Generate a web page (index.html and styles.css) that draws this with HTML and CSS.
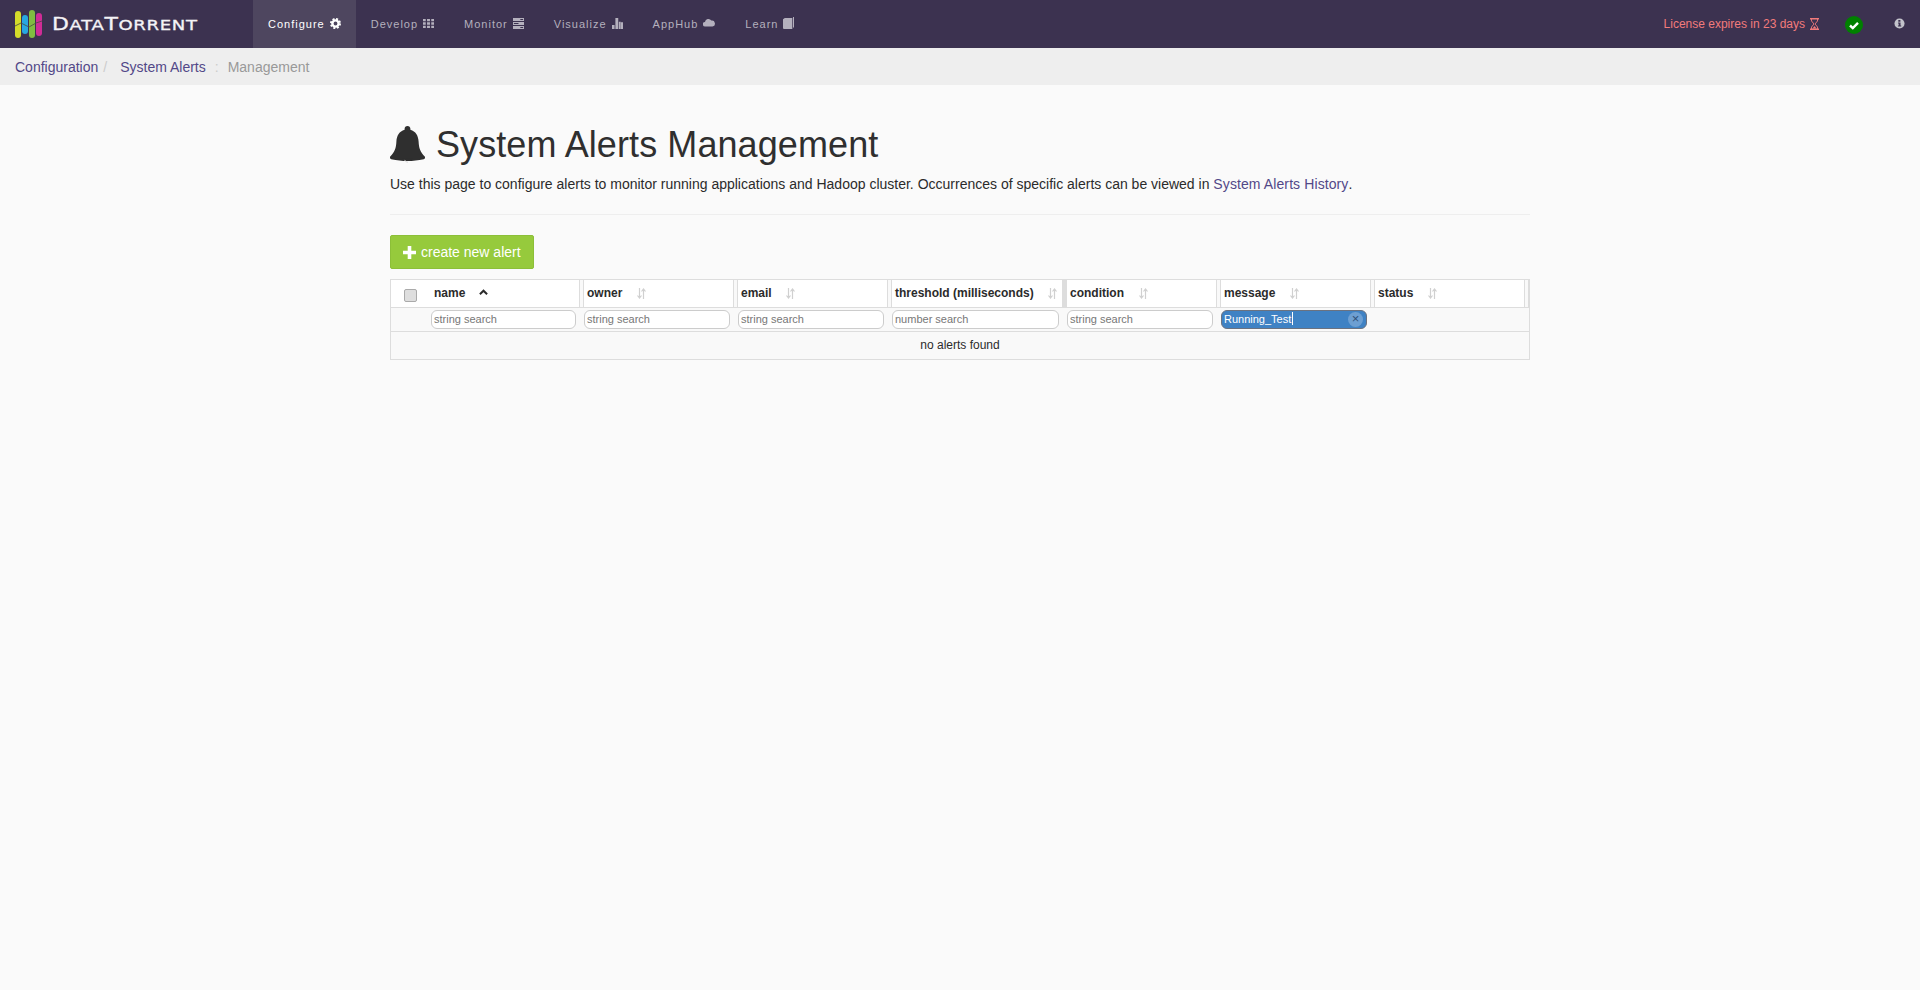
FILE: index.html
```html
<!DOCTYPE html>
<html lang="en">
<head>
<meta charset="utf-8">
<title>System Alerts Management</title>
<link rel="stylesheet" href="styles.css">
</head>
<body>
<header class="navbar">
  <a class="brand">
    <svg class="logo" viewBox="0 0 28 28" width="28" height="28">
      <rect x="0" y="1" width="6" height="27" rx="3" fill="#d5dc2a"/>
      <rect x="7" y="5" width="6" height="19" rx="3" fill="#27a7e1"/>
      <rect x="14" y="0" width="6" height="28" rx="3" fill="#80bd41"/>
      <rect x="21" y="3" width="6" height="23" rx="3" fill="#cf2c96"/>
      <path d="M0 16l6-3 8 4 7-4 6-2" fill="none" stroke="#4a4a40" stroke-width=".8"/>
    </svg>
    <span class="brand-name">D<span class="sm">ata</span>T<span class="sm">orrent</span></span>
  </a>
  <nav class="menu">
    <a class="menu-item active">Configure
      <svg class="ico" viewBox="0 0 12 12"><circle cx="6" cy="6" r="3.4" fill="none" stroke="currentColor" stroke-width="2.6"/><circle cx="6" cy="6" r="5" fill="none" stroke="currentColor" stroke-width="2" stroke-dasharray="2.2 1.73"/></svg></a>
    <a class="menu-item">Develop
      <svg class="ico" viewBox="0 0 12 12" fill="currentColor"><path d="M0 1h3v2.600H0zM4.400 1h3.200v2.600H4.400zM9 1h3v2.600H9zM0 4.700h3v2.600H0zM4.400 4.700h3.200v2.600H4.400zM9 4.700h3v2.600H9zM0 8.400h3V11H0zM4.400 8.400h3.200V11H4.400zM9 8.400h3V11H9z"/></svg></a>
    <a class="menu-item">Monitor
      <svg class="ico" viewBox="0 0 12 12" fill="currentColor"><path d="M0 0h12v3.400H0zM0 4.300h12v3.400H0zM0 8.600h12V12H0z"/><path d="M8 1.200h3v1H8zM1 5.500h5v1H1zM8 9.800h3v1H8z" fill="#3c3250"/></svg></a>
    <a class="menu-item">Visualize
      <svg class="ico" viewBox="0 0 12 12" fill="currentColor"><path d="M0 7.500h2.800V12H0zM3.700 0h3.100v12H3.700zM7.500 4h2v8h-2zM9.800 4.600H12V12H9.800z"/></svg></a>
    <a class="menu-item">AppHub
      <svg class="ico ico-cloud" viewBox="0 0 12 9" fill="currentColor"><path d="M2.300 8.500a2.300 2.300 0 0 1-.3-4.600A3.400 3.400 0 0 1 8.300 2.600 3 3 0 0 1 9.500 8.500z"/></svg></a>
    <a class="menu-item">Learn
      <svg class="ico ico-book" viewBox="0 0 11 12" fill="currentColor"><path d="M0 2.200L1.800 1h7.500v11H1a1 1 0 0 1-1-1z"/><path d="M10 0h1v10.500h-1z"/></svg></a>
  </nav>
  <div class="nav-right">
    <span class="license">License expires in 23 days
      <svg class="glass" viewBox="0 0 9 12"><path d="M0 .7h9M0 11.300h9" stroke="currentColor" stroke-width="1.400" fill="none"/><path d="M1.500 1v2L4 6 1.500 9v2M7.500 1v2L5 6l2.500 3v2" stroke="currentColor" stroke-width=".9" fill="none"/><path d="M2.500 10.500L4.500 8l2 2.500z" fill="currentColor"/></svg></span>
    <svg class="status-ok" viewBox="0 0 18 18"><circle cx="9" cy="9" r="9" fill="#008000"/><path d="M5 9.500l2.800 2.600L13 6.800" fill="none" stroke="#fff" stroke-width="2.400"/></svg>
    <svg class="info" viewBox="0 0 12 12"><circle cx="6" cy="6" r="5.500" fill="#c3c3cb"/><path d="M4.700 2.300h2.300v1.800H4.700zM4.400 5h2.700v3.300h.8v1.100H4.300V8.300h.8V6H4.400z" fill="#3c3250"/></svg>
  </div>
</header>

<div class="crumbs">
  <a class="crumb">Configuration</a><span class="sep slash">/</span>
  <a class="crumb">System Alerts</a><span class="sep colon">:</span>
  <span class="crumb-current">Management</span>
</div>

<main class="page">
  <h1 class="title">
    <svg class="bell" viewBox="0 0 34 36"><path fill="#2f2f2f" d="M17 0c1.700 0 2.800 1.100 2.800 2.700v1C25 5.200 27.500 9.500 27.800 15c.3 6.500 1.500 10 6.200 15 .3 1 0 2-1.200 2.300C27 33.500 22.500 34 17 34S7 33.500 1.200 32.300C0 32 -.3 31 0 30c4.700-5 5.900-8.500 6.200-15C6.500 9.500 9 5.200 14.200 3.700v-1C14.200 1.100 15.300 0 17 0z"/><path d="M12.500 31.500a5 4.500 0 0 0 9 0z" fill="#2f2f2f"/><path d="M14.200 33a3.400 3.400 0 0 0 3.300 2.300" fill="none" stroke="#d8d8d8" stroke-width=".9"/></svg>
    <span class="title-text">System Alerts Management</span></h1>
  <p class="intro">Use this page to configure alerts to monitor running applications and Hadoop cluster. Occurrences of specific alerts can be viewed in <a class="link">System Alerts History</a>.</p>
  <hr class="rule">
  <button class="btn-create" type="button">
    <svg class="plus" viewBox="0 0 13 13"><path d="M4.700 0h3.600v4.700H13v3.600H8.300V13H4.700V8.300H0V4.700h4.700z" fill="#fff"/></svg>
    create new alert</button>

  <table class="grid">
    <colgroup>
      <col class="c-check"><col class="c-name"><col class="c-std"><col class="c-std"><col class="c-wide"><col class="c-std"><col class="c-std"><col class="c-std"><col class="c-end">
    </colgroup>
    <thead>
      <tr class="head">
        <th class="check-cell"><input class="check" type="checkbox"></th>
        <th>name<svg class="chev" viewBox="0 0 10 7"><path d="M1 5.500l4-4 4 4" fill="none" stroke="#2b2b2b" stroke-width="2.200"/></svg><span class="handle"></span></th>
        <th>owner<svg class="sort" viewBox="0 0 9 11"><path d="M2.500 0v9M.500 7.500l2 2.500 2-2.500M6.500 11V2M4.500 3.500l2-2.500 2 2.500" fill="none" stroke="#d0d0d0" stroke-width="1.200"/></svg><span class="handle"></span></th>
        <th>email<svg class="sort" viewBox="0 0 9 11"><path d="M2.500 0v9M.500 7.500l2 2.500 2-2.500M6.500 11V2M4.500 3.500l2-2.500 2 2.500" fill="none" stroke="#d0d0d0" stroke-width="1.200"/></svg><span class="handle"></span></th>
        <th>threshold (milliseconds)<svg class="sort" viewBox="0 0 9 11"><path d="M2.500 0v9M.500 7.500l2 2.500 2-2.500M6.500 11V2M4.500 3.500l2-2.500 2 2.500" fill="none" stroke="#d0d0d0" stroke-width="1.200"/></svg><span class="handle hot"></span></th>
        <th>condition<svg class="sort" viewBox="0 0 9 11"><path d="M2.500 0v9M.500 7.500l2 2.500 2-2.500M6.500 11V2M4.500 3.500l2-2.500 2 2.500" fill="none" stroke="#d0d0d0" stroke-width="1.200"/></svg><span class="handle"></span></th>
        <th>message<svg class="sort" viewBox="0 0 9 11"><path d="M2.500 0v9M.500 7.500l2 2.500 2-2.500M6.500 11V2M4.500 3.500l2-2.500 2 2.500" fill="none" stroke="#d0d0d0" stroke-width="1.200"/></svg><span class="handle"></span></th>
        <th>status<svg class="sort" viewBox="0 0 9 11"><path d="M2.500 0v9M.500 7.500l2 2.500 2-2.500M6.500 11V2M4.500 3.500l2-2.500 2 2.500" fill="none" stroke="#d0d0d0" stroke-width="1.200"/></svg><span class="handle"></span></th>
        <th class="end-cell"></th>
      </tr>
      <tr class="filters">
        <td></td>
        <td><input class="search" placeholder="string search"></td>
        <td><input class="search" placeholder="string search"></td>
        <td><input class="search" placeholder="string search"></td>
        <td><input class="search" placeholder="number search"></td>
        <td><input class="search" placeholder="string search"></td>
        <td>
          <div class="active-filter">
            <input class="search on" value="Running_Test">
            <span class="caret"></span>
            <span class="clear">×</span>
          </div>
        </td>
        <td></td>
        <td></td>
      </tr>
    </thead>
    <tbody>
      <tr class="empty"><td colspan="9">no alerts found</td></tr>
    </tbody>
  </table>
</main>
</body>
</html>
```
FILE: styles.css
```css
* { box-sizing: border-box; }
html, body { margin: 0; height: 100%; }
body {
  background: #fafafa;
  color: #2b2b2b;
  font: 14px/20px "Liberation Sans", Arial, sans-serif;
}

/* Top bar */
.navbar {
  display: flex;
  align-items: stretch;
  height: 48px;
  background: #3c3250;
}
.brand {
  display: flex;
  align-items: center;
  gap: 9px;
  width: 253px;
  padding-left: 15px;
}
.logo { flex: none; }
.brand-name {
  color: #f4f3f6;
  font: 400 17px/1 "DejaVu Sans", sans-serif;
  -webkit-text-stroke: .3px #f4f3f6;
  letter-spacing: .5px;
  transform: scaleX(1.29);
  transform-origin: left center;
  white-space: nowrap;
}
.sm { font-size: 14px; text-transform: uppercase; }
.menu { display: flex; }
.menu-item {
  display: flex;
  align-items: center;
  gap: 5px;
  padding: 0 15px;
  color: #b4b0bd;
  font-size: 11px;
  letter-spacing: 1px;
}
.menu-item.active { background: #4e465f; color: #fff; }
.ico { width: 11px; height: 11px; margin-top: -2px; }
.ico-cloud { width: 12px; height: 9px; margin-top: -4px; }
.ico-book { height: 12px; margin-top: -3px; }
.nav-right {
  display: flex;
  align-items: center;
  margin-left: auto;
  padding-right: 15px;
}
.license {
  display: flex;
  align-items: center;
  gap: 5px;
  color: #f27b7b;
  font-size: 12px;
}
.glass { width: 9px; height: 12px; }
.status-ok { width: 18px; height: 18px; margin-left: 26px; margin-top: 2px; }
.info { width: 11px; height: 11px; margin-left: 31px; margin-top: -2px; }

/* Breadcrumb */
.crumbs {
  display: flex;
  align-items: center;
  height: 37px;
  padding-left: 15px;
  background: #eee;
}
.crumb { color: #524888; }
.crumb-current { color: #999; }
.sep { color: #ccc; }
.slash { margin: 0 13px 0 5px; }
.colon { margin: 0 9px 0 9px; }

/* Content */
.page { width: 1140px; margin: 0 auto; padding-top: 40px; }
.title {
  display: flex;
  align-items: center;
  gap: 11px;
  margin: 0;
  color: #2f2f2f;
  font-size: 36px;
  font-weight: 400;
  line-height: 40px;
}
.title-text { letter-spacing: .09px; }
.bell { width: 35px; height: 37px; flex: none; margin: -2px 0 0; }
.intro { margin: 9px 0 0; }
.link { color: #524888; letter-spacing: .1px; }
.rule {
  height: 1px;
  margin: 20px 0;
  border: 0;
  background: #eee;
}
.btn-create {
  display: flex;
  align-items: center;
  gap: 5px;
  height: 34px;
  padding: 0 12px;
  border: 1px solid #8cbf38;
  border-radius: 2px;
  background: #96ca3c;
  color: #fff;
  font: 14px/20px "Liberation Sans", sans-serif;
}
.plus { width: 13px; height: 13px; }

/* Table */
.grid {
  width: 1140px;
  margin-top: 10px;
  border: 1px solid #ddd;
  border-spacing: 0;
  table-layout: fixed;
  font-size: 12px;
}
.c-check { width: 38px; }
.c-name { width: 153px; }
.c-std { width: 154px; }
.c-wide { width: 175px; }
.c-end { width: 2px; }
.head th {
  position: relative;
  height: 28px;
  padding: 0 0 2px 5px;
  border-bottom: 1px solid #ddd;
  background: #fff;
  color: #2b2b2b;
  font-weight: 700;
  text-align: left;
  white-space: nowrap;
}
.head .check-cell { padding: 3px 0 0 13px; }
.head .end-cell { padding: 0; background: #f9f9f9; }
.check {
  display: block;
  width: 13px;
  height: 13px;
  margin: 0;
  appearance: none;
  border: 1px solid #aaa;
  border-radius: 2px;
  background: #dedede;
}
.chev { width: 9px; height: 7px; margin-left: 14px; vertical-align: 1px; }
.sort { width: 9px; height: 11px; margin-left: 14.5px; vertical-align: -2px; }
.handle {
  position: absolute;
  top: 0;
  right: -2px;
  bottom: 0;
  z-index: 1;
  width: 5px;
  border: 1px solid #ddd;
  border-width: 0 1px;
  background: #f9f9f9;
}
.handle.hot { background: #ddd; }
.filters td {
  height: 24px;
  padding: 0 0 0 2px;
  border-bottom: 1px solid #ddd;
  background: #f9f9f9;
}
.search {
  display: block;
  width: calc(100% - 6px);
  height: 19px;
  padding: 0 2px 2px;
  border: 1px solid #ccc;
  border-radius: 6px;
  background: #fff;
  color: #555;
  font: 11px "Liberation Sans", sans-serif;
}
.search::placeholder { color: #777; opacity: 1; }
.active-filter { position: relative; width: calc(100% - 6px); }
.search.on {
  width: 100%;
  border-color: #6b7280;
  background: #3f82c4;
  color: #fff;
}
.caret {
  position: absolute;
  top: 2px;
  left: 71px;
  width: 1px;
  height: 13px;
  background: #fff;
}
.clear {
  position: absolute;
  top: 2px;
  right: 4px;
  width: 15px;
  height: 15px;
  border-radius: 50%;
  background: #6d9fd2;
  color: #2f4f78;
  font-size: 13px;
  line-height: 14px;
  text-align: center;
}
.empty td {
  height: 27px;
  padding: 0 0 2px;
  background: #f9f9f9;
  text-align: center;
}
```
